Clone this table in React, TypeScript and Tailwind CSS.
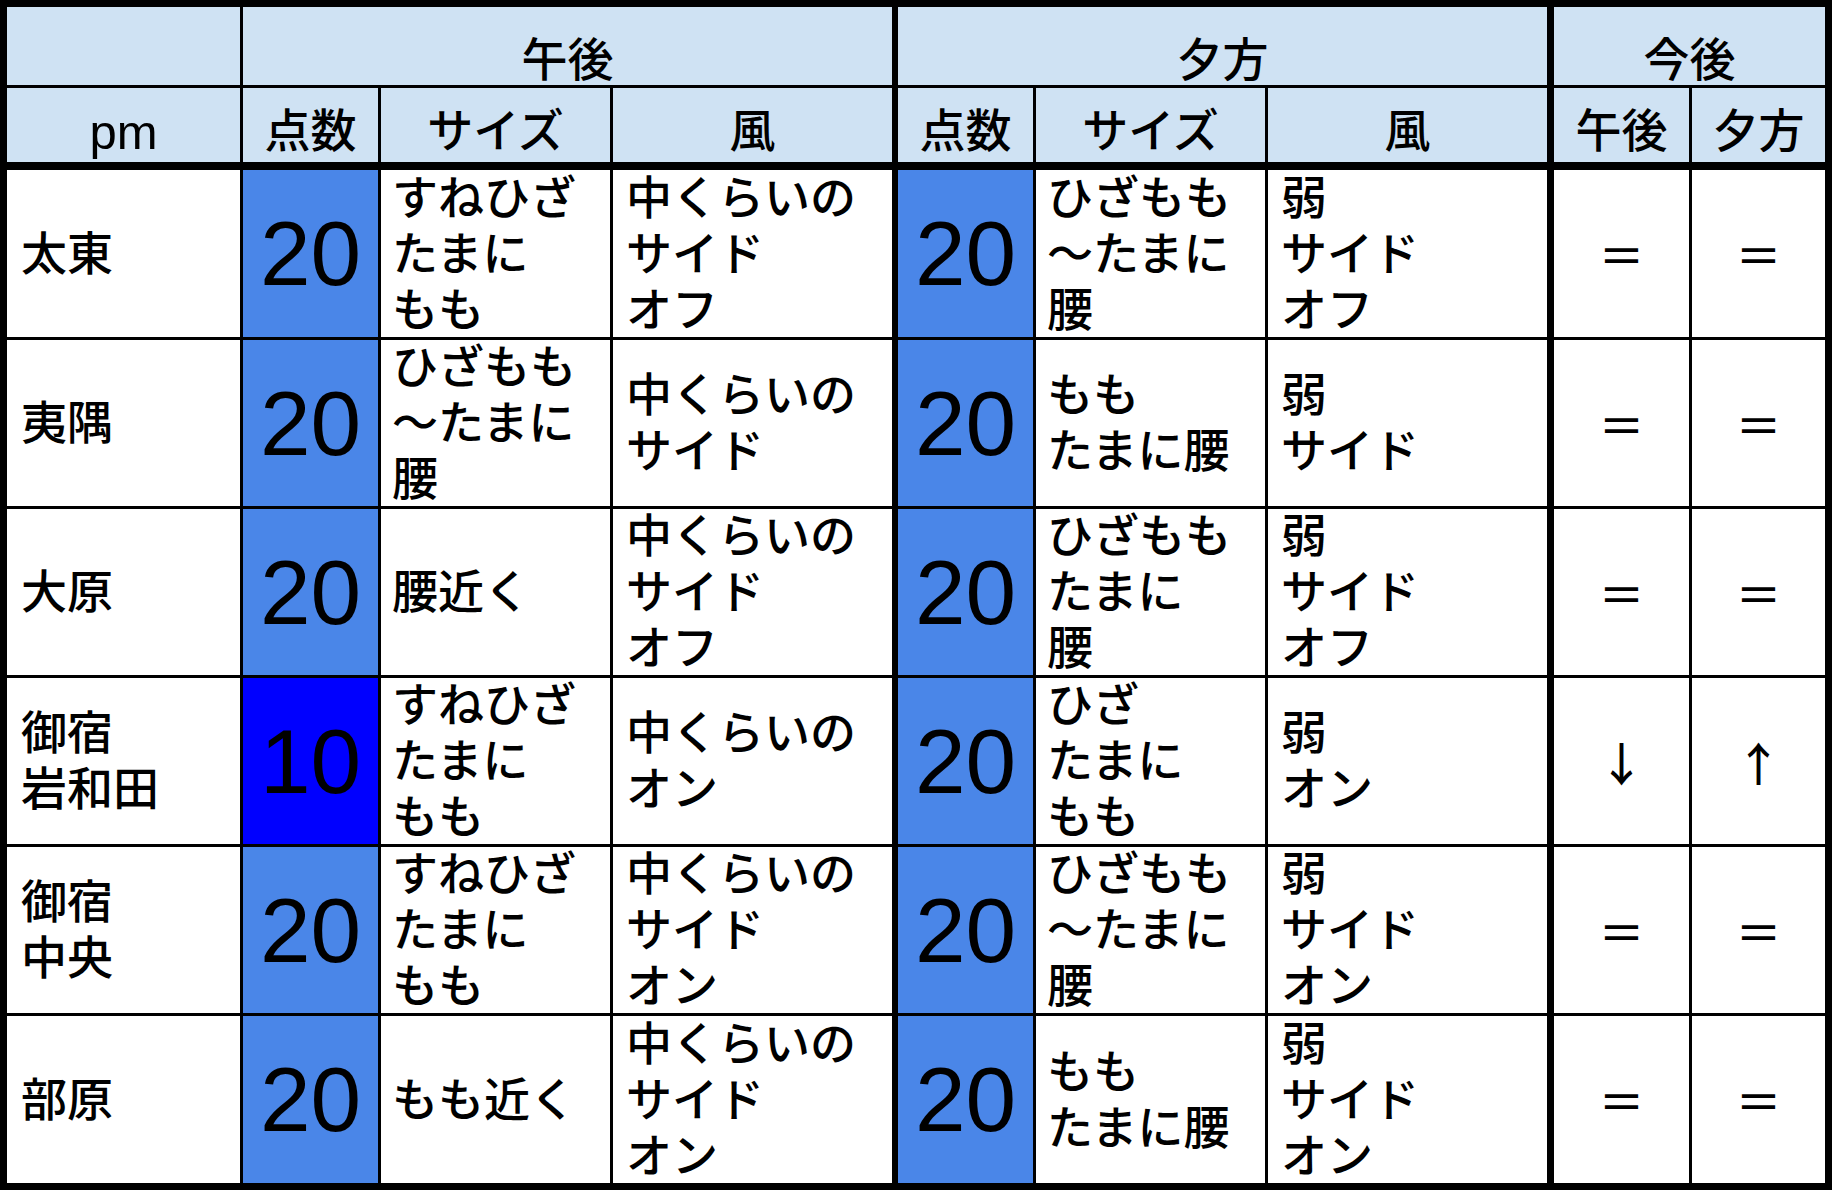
import React from "react";

type Half = { score: number; size: string[]; wind: string[] };
type Row = { name: string[]; pm: Half; eve: Half; trend: [string, string] };

const rows: Row[] = [
  {
    name: ["太東"],
    pm: { score: 20, size: ["すねひざ", "たまに", "もも"], wind: ["中くらいの", "サイド", "オフ"] },
    eve: { score: 20, size: ["ひざもも", "～たまに", "腰"], wind: ["弱", "サイド", "オフ"] },
    trend: ["＝", "＝"],
  },
  {
    name: ["夷隅"],
    pm: { score: 20, size: ["ひざもも", "～たまに", "腰"], wind: ["中くらいの", "サイド"] },
    eve: { score: 20, size: ["もも", "たまに腰"], wind: ["弱", "サイド"] },
    trend: ["＝", "＝"],
  },
  {
    name: ["大原"],
    pm: { score: 20, size: ["腰近く"], wind: ["中くらいの", "サイド", "オフ"] },
    eve: { score: 20, size: ["ひざもも", "たまに", "腰"], wind: ["弱", "サイド", "オフ"] },
    trend: ["＝", "＝"],
  },
  {
    name: ["御宿", "岩和田"],
    pm: { score: 10, size: ["すねひざ", "たまに", "もも"], wind: ["中くらいの", "オン"] },
    eve: { score: 20, size: ["ひざ", "たまに", "もも"], wind: ["弱", "オン"] },
    trend: ["↓", "↑"],
  },
  {
    name: ["御宿", "中央"],
    pm: { score: 20, size: ["すねひざ", "たまに", "もも"], wind: ["中くらいの", "サイド", "オン"] },
    eve: { score: 20, size: ["ひざもも", "～たまに", "腰"], wind: ["弱", "サイド", "オン"] },
    trend: ["＝", "＝"],
  },
  {
    name: ["部原"],
    pm: { score: 20, size: ["もも近く"], wind: ["中くらいの", "サイド", "オン"] },
    eve: { score: 20, size: ["もも", "たまに腰"], wind: ["弱", "サイド", "オン"] },
    trend: ["＝", "＝"],
  },
];

const font = "font-['Liberation_Sans','Noto_Sans_CJK_JP',sans-serif]";

function Lines({ lines }: { lines: string[] }) {
  return (
    <div className="leading-[56px] whitespace-nowrap">
      {lines.map((l, i) => (
        <div key={i}>{l}</div>
      ))}
    </div>
  );
}

function Score({ value, top, left }: { value: number; top: string; left: string }) {
  const bg = value === 10 ? "bg-[#0000ff]" : "bg-[#4a86e8]";
  return (
    <div className={`${top} ${left} border-black ${bg} flex items-center justify-center text-[91px] font-normal leading-none font-['Liberation_Sans',sans-serif]`}>
      {value}
    </div>
  );
}

function TextCell({ lines, top, left, pad }: { lines: string[]; top: string; left: string; pad: string }) {
  return (
    <div className={`${top} ${left} border-black bg-white flex items-center ${pad}`}>
      <Lines lines={lines} />
    </div>
  );
}

export default function App() {
  return (
    <div className={`w-[1832px] h-[1192px] bg-white text-black font-medium ${font}`}>
      <div className="border-[7px] border-black w-[1832px] grid grid-cols-[233px_138px_232px_282px_141px_232px_282px_142px_136px] grid-rows-[78px_77px_175px_169px_169px_169px_169px_170px] text-[46px]">
        {/* header row 1 */}
        <div className="bg-[#cfe2f3]" />
        <div className="col-span-3 border-l-[3px] border-black bg-[#cfe2f3] flex items-end justify-center leading-[50px]">午後</div>
        <div className="col-span-3 border-l-[6px] border-black bg-[#cfe2f3] flex items-end justify-center leading-[50px]">夕方</div>
        <div className="col-span-2 border-l-[7px] border-black bg-[#cfe2f3] flex items-end justify-center leading-[50px]">今後</div>

        {/* header row 2 */}
        <div className="border-t-[3px] border-black bg-[#cfe2f3] flex items-end justify-center pb-[5px] text-[49px] font-normal leading-[50px]">pm</div>
        <div className="border-t-[3px] border-l-[3px] border-black bg-[#cfe2f3] flex items-end justify-center pb-[3px] leading-[56px]">点数</div>
        <div className="border-t-[3px] border-l-[3px] border-black bg-[#cfe2f3] flex items-end justify-center pb-[3px] leading-[56px]">サイズ</div>
        <div className="border-t-[3px] border-l-[3px] border-black bg-[#cfe2f3] flex items-end justify-center pb-[3px] leading-[56px]">風</div>
        <div className="border-t-[3px] border-l-[6px] border-black bg-[#cfe2f3] flex items-end justify-center pb-[3px] leading-[56px]">点数</div>
        <div className="border-t-[3px] border-l-[3px] border-black bg-[#cfe2f3] flex items-end justify-center pb-[3px] leading-[56px]">サイズ</div>
        <div className="border-t-[3px] border-l-[3px] border-black bg-[#cfe2f3] flex items-end justify-center pb-[3px] leading-[56px]">風</div>
        <div className="border-t-[3px] border-l-[7px] border-black bg-[#cfe2f3] flex items-end justify-center pb-[3px] leading-[56px]">午後</div>
        <div className="border-t-[3px] border-l-[3px] border-black bg-[#cfe2f3] flex items-end justify-center pb-[3px] leading-[56px]">夕方</div>

        {/* body */}
        {rows.map((r, i) => {
          const top = i === 0 ? "border-t-[8px]" : "border-t-[3px]";
          return (
            <React.Fragment key={i}>
              <TextCell lines={r.name} top={top} left="" pad="pl-[14px]" />
              <Score value={r.pm.score} top={top} left="border-l-[3px]" />
              <TextCell lines={r.pm.size} top={top} left="border-l-[3px]" pad="pl-[11px]" />
              <TextCell lines={r.pm.wind} top={top} left="border-l-[3px]" pad="pl-[13px]" />
              <Score value={r.eve.score} top={top} left="border-l-[6px]" />
              <TextCell lines={r.eve.size} top={top} left="border-l-[3px]" pad="pl-[11px]" />
              <TextCell lines={r.eve.wind} top={top} left="border-l-[3px]" pad="pl-[13px]" />
              <div className={`${top} border-l-[7px] border-black bg-white flex items-center justify-center font-['Noto_Sans_CJK_JP',sans-serif]`}>{r.trend[0]}</div>
              <div className={`${top} border-l-[3px] border-black bg-white flex items-center justify-center font-['Noto_Sans_CJK_JP',sans-serif]`}>{r.trend[1]}</div>
            </React.Fragment>
          );
        })}
      </div>
    </div>
  );
}
